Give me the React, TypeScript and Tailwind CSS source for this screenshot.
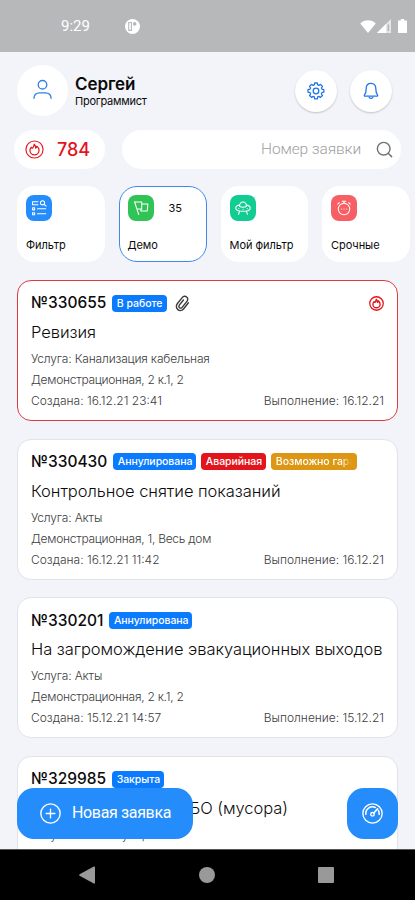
import React from 'react';
import { Search } from 'lucide-react';

type Badge = { text: string; className: string; faded?: boolean };

type Order = {
    id: string;
    badges: Badge[];
    title: string;
    service: string;
    address: string;
    created: string;
    due: string;
    urgent?: boolean;
    attachment?: boolean;
};

const BLUE = 'bg-[#0a7aff]';

const orders: Order[] = [
    {
        id: '330655',
        badges: [{ text: 'В работе', className: `${BLUE} w-[55px]` }],
        title: 'Ревизия',
        service: 'Канализация кабельная',
        address: 'Демонстрационная, 2 к.1, 2',
        created: '16.12.21 23:41',
        due: '16.12.21',
        urgent: true,
        attachment: true,
    },
    {
        id: '330430',
        badges: [
            { text: 'Аннулирована', className: `${BLUE} w-[83px]` },
            { text: 'Аварийная', className: 'bg-[#e3141b] w-[65px]' },
            { text: 'Возможно гарантия', className: 'bg-[#dd9712] w-[86px]', faded: true },
        ],
        title: 'Контрольное снятие показаний',
        service: 'Акты',
        address: 'Демонстрационная, 1, Весь дом',
        created: '16.12.21 11:42',
        due: '16.12.21',
    },
    {
        id: '330201',
        badges: [{ text: 'Аннулирована', className: `${BLUE} w-[83px]` }],
        title: 'На загромождение эвакуационных выходов',
        service: 'Акты',
        address: 'Демонстрационная, 2 к.1, 2',
        created: '15.12.21 14:57',
        due: '15.12.21',
    },
    {
        id: '329985',
        badges: [{ text: 'Закрыта', className: `${BLUE} w-[52px]` }],
        title: 'Прекращён вывоз ТБО (мусора)',
        service: 'Вывоз мусора',
        address: 'Демонстрационная, 1',
        created: '15.12.21 10:12',
        due: '15.12.21',
    },
];

function FireIcon({ className, bold }: { className?: string; bold?: boolean }) {
    return (
        <svg viewBox="0 0 20 20" className={className} fill="none" stroke="#e3141b" strokeLinecap="round" strokeLinejoin="round">
            <circle cx="10" cy="10" r="9" strokeWidth={bold ? 1.7 : 1.2} />
            <path
                d="M6.700 7.600C5.700 8.600 5.200 9.700 5.200 10.900a4.800 4.800 0 0 0 9.600 0c0-1.900-.9-3.400-2.300-4.400-.1 1-.5 1.600-1.200 2C11.200 6.800 10.700 5.400 9.700 4.500 9.600 6.200 8.900 7.200 8.100 8.500 7.500 8.600 7 8.200 6.700 7.600Z"
                strokeWidth={bold ? 1.8 : 1.3}
            />
        </svg>
    );
}

function ClipIcon() {
    return (
        <svg viewBox="0 0 16 18" className="ml-[8px] h-[17px] w-[15px]" fill="none" stroke="#3a3a3e" strokeWidth="1.500" strokeLinecap="round">
            <path d="M14.300 8.200 9.300 14.600C7.800 16.500 5 17 3.100 15.500S.9 11.200 2.400 9.300L7.900 2.500C9 1.100 11 .9 12.400 2s1.600 3 .5 4.400l-5.300 6.700c-.7.9-1.900 1-2.700.4s-1-1.800-.3-2.700L9 5.300" />
        </svg>
    );
}

function StatusBar() {
    return (
        <div className="flex h-[52px] shrink-0 items-center bg-[#b7b8ba] pl-[61px] pr-[8px] text-white">
            <span className="w-[64px] font-[Roboto,sans-serif] text-[15px]">9:29</span>
            <svg viewBox="0 0 14 14" className="h-[15px] w-[15px]">
                <circle cx="7" cy="7" r="7" fill="#fff" />
                <path d="M3.500 3.200H6v7.400H3.500Z" fill="none" stroke="#b7b8ba" strokeWidth="1" />
                <circle cx="9" cy="4.600" r="1.700" fill="#b7b8ba" />
            </svg>
            <div className="ml-auto flex items-center">
                <svg viewBox="0 0 16 13" className="h-[13px] w-[16px]" fill="#fff">
                    <path d="M8 13 .3 3.400C4.500-.9 11.500-.9 15.700 3.400Z" />
                </svg>
                <svg viewBox="0 0 14 14" className="ml-[1px] h-[14px] w-[14px]" fill="#fff">
                    <path d="M0 14 14 0v14Z" opacity=".65" />
                    <path d="M0 14 9 5v9Z" />
                    <path d="M10.500 5.500h1.700V12h-1.700Z" fill="#b7b8ba" />
                </svg>
                <svg viewBox="0 0 9 14" className="ml-[7px] h-[14px] w-[9px]" fill="#fff">
                    <path d="M2.800 0h3.400v1.400H9V14H0V1.400h2.800Z" />
                </svg>
            </div>
        </div>
    );
}

function Header() {
    return (
        <div className="flex items-center pl-[17px] pr-[23px] pt-[13px]">
            <div className="flex h-[51px] w-[51px] items-center justify-center rounded-full bg-white">
                <svg viewBox="0 0 20 22" className="mt-[-2px] h-[21px] w-[19px]" fill="none" stroke="#2f80e4" strokeWidth="1.400" strokeLinecap="round">
                    <circle cx="10" cy="6" r="4.500" />
                    <path d="M1 20.300c0-4 2.500-5.800 6-5.800h6c3.500 0 6 1.800 6 5.800" />
                </svg>
            </div>
            <div className="ml-[7px]">
                <div className="text-[17px] font-semibold leading-[20px] tracking-[-0.1px]">Сергей</div>
                <div className="text-[11px] leading-[14px] tracking-[-0.250px]">Программист</div>
            </div>
            <div className="ml-auto flex gap-[13px]">
                <div className="flex h-[42px] w-[42px] items-center justify-center rounded-full bg-white shadow-[0_1px_2px_rgba(0,0,0,0.2)]">
                    <svg viewBox="0 0 18 18" className="h-[18px] w-[18px]" fill="none" stroke="#2076e8" strokeWidth="1.300" strokeLinejoin="round">
                        <circle cx="9" cy="9" r="2.800" />
                        <path d="M7.700 1h2.600l.4 1.900 1.100.5 1.700-1 1.900 1.900-1 1.700.5 1.100 1.900.5v2.600l-1.900.5-.5 1.100 1 1.700-1.900 1.900-1.700-1-1.100.5-.4 1.900H7.700l-.4-1.900-1.100-.5-1.700 1-1.900-1.900 1-1.700-.5-1.100L1 10.200V7.600l2.100-.5.5-1.100-1-1.700 1.900-1.900 1.700 1 1.100-.5Z" />
                    </svg>
                </div>
                <div className="flex h-[42px] w-[42px] items-center justify-center rounded-full bg-white shadow-[0_1px_2px_rgba(0,0,0,0.2)]">
                    <svg viewBox="0 0 16 18" className="h-[18px] w-[16px]" fill="none" stroke="#2076e8" strokeWidth="1.300" strokeLinejoin="round">
                        <path d="M8 1.400c-3.400 0-4.800 2.300-4.800 5.200 0 3.200-.5 5-1.700 6.300-.4.500-.2 1.300.6 1.300h11.800c.8 0 1-.8.6-1.300C13.300 11.600 12.800 9.800 12.800 6.600c0-2.900-1.400-5.200-4.800-5.200Z" />
                        <path d="M6 14.800c.2 1 1 1.500 2 1.500s1.800-.5 2-1.500" />
                    </svg>
                </div>
            </div>
        </div>
    );
}

function SearchRow() {
    return (
        <div className="mt-[14px] flex px-[14px]">
            <div className="flex h-[39px] w-[91px] items-center rounded-full bg-white pl-[11px]">
                <FireIcon className="h-[19px] w-[19px]" />
                <span className="ml-[13px] text-[18px] font-medium text-[#e3141b]">784</span>
            </div>
            <div className="ml-[17px] flex h-[39px] flex-1 items-center justify-end rounded-full bg-white pr-[7px]">
                <span className="font-[Roboto,sans-serif] text-[15.500px] font-light tracking-[-0.120px] text-[#a0a0a0]">Номер заявки</span>
                <Search className="ml-[14px] h-[19px] w-[19px] text-[#717171]" strokeWidth={1.8} />
            </div>
        </div>
    );
}

const filters = [
    {
        label: 'Фильтр',
        color: 'bg-[#258cfb]',
        icon: (
            <>
                <path d="M11.500 6.500H6.300v2.800h5.200M6.300 12.300h2v2h-2zM6.300 17h2v2h-2zM11 13.300h8M11 18h8" />
                <circle cx="15.900" cy="7.500" r="2" />
                <path d="m17.500 9 1.800 1.800" />
            </>
        ),
    },
    {
        label: 'Демо',
        color: 'bg-[#30c457]',
        count: 35,
        active: true,
        icon: <path d="m6.300 6.500 4 12.300M6.300 6.700h6.900v6.800H8.900M13.200 8.600h5.900l-.6 6.800h-6.200l.4-1.900" />,
    },
    {
        label: 'Мой фильтр',
        color: 'bg-[#13cc91]',
        icon: (
            <>
                <path d="M9.200 9.700C6.900 10.200 5.500 11.200 5.500 12.500c0 1.900 3.100 3.200 7 3.200s7-1.300 7-3.200c0-1.300-1.400-2.300-3.700-2.800" />
                <path d="M9.200 11C9 8.500 10.500 6.800 12.500 6.800S16 8.500 15.800 11c-2 .9-4.600.9-6.600 0ZM9.200 15.700l-1 2.800M15.800 15.700l1 2.800M8.500 13h.1M12.500 13.700h.1M16.500 13h.1" />
            </>
        ),
    },
    {
        label: 'Срочные',
        color: 'bg-[#f85f64]',
        icon: (
            <>
                <circle cx="12.500" cy="13.500" r="5.500" />
                <path d="M12.500 8V6M10.800 6h3.400M6.500 8.800l1.500-1.500M18.500 8.800l-1.500-1.500M10 13.500h.1M12.500 13.500h.1M15 13.500h.1" />
            </>
        ),
    },
];

function Filters() {
    return (
        <div className="mt-[17px] flex shrink-0 gap-[14px] pl-[17px]">
            {filters.map((f) => (
                <div
                    key={f.label}
                    className={`h-[76px] shrink-0 rounded-[18px] border bg-white px-[8px] pt-[8px] ${f.active ? 'w-[88px] border-[#4189e8]' : 'w-[87.500px] border-transparent'}`}
                >
                    <div className="flex items-center">
                        <svg viewBox="0 0 25 25" className={`h-[26px] w-[26px] rounded-[8px] ${f.color}`} fill="none" stroke="#fff" strokeWidth="1" strokeLinecap="round" strokeLinejoin="round">
                            {f.icon}
                        </svg>
                        {f.count && <span className="ml-[15px] text-[11px]">{f.count}</span>}
                    </div>
                    <div className="mt-[16px] whitespace-nowrap text-[11px] leading-[16px] tracking-[-0.050px]">{f.label}</div>
                </div>
            ))}
        </div>
    );
}

function OrderCard({ order }: { order: Order }) {
    return (
        <div
            className={`h-[141px] shrink-0 rounded-[14px] border bg-white px-[13px] pt-[11px] ${order.urgent ? 'border-[#dc3b3b]' : 'border-[#e1e3e8]'}`}
        >
            <div className="flex h-[22px] items-center whitespace-nowrap">
                <span className="text-[15.500px] font-medium">№{order.id}</span>
                <div className="ml-[5.500px] flex gap-[5px]">
                    {order.badges.map((b) => (
                        <span key={b.text} className={`h-[17px] overflow-hidden rounded-[4px] px-[5px] text-[10.500px] font-medium leading-[17px] tracking-[-0.050px] text-white ${b.className}`}>
                            <span className={b.faded ? 'block overflow-hidden [mask-image:linear-gradient(to_right,black_85%,transparent)]' : 'block'}>{b.text}</span>
                        </span>
                    ))}
                </div>
                {order.attachment && <ClipIcon />}
                {order.urgent && <FireIcon bold className="ml-auto h-[15px] w-[15px]" />}
            </div>
            <div className="mt-[6px] whitespace-nowrap text-[16.500px] font-light leading-[24px] tracking-[-0.050px]">{order.title}</div>
            <div className="mt-[4px] text-[12px] font-light leading-[21px] text-[#3c3c3c]">
                <div className="tracking-[-0.160px]">Услуга: {order.service}</div>
                <div className="tracking-[-0.260px]">{order.address}</div>
                <div className="flex justify-between">
                    <span>Создана: {order.created}</span>
                    <span>Выполнение: {order.due}</span>
                </div>
            </div>
        </div>
    );
}

function NavBar() {
    return (
        <div className="flex h-[51px] shrink-0 items-center border-t border-[#555] bg-black pl-[79px]">
            <svg viewBox="0 0 16 18" className="h-[18px] w-[16px]" fill="#999">
                <path d="M14.800.5q1.200-.5 1.200 1v15q0 1.500-1.200 1L.6 9.800Q-.4 9 .6 8.200Z" />
            </svg>
            <div className="ml-[104px] h-[16px] w-[16px] rounded-full bg-[#999]" />
            <div className="ml-[103px] h-[16px] w-[16px] rounded-[1px] bg-[#999]" />
        </div>
    );
}

export default function App() {
    return (
        <div className="flex h-[900px] w-[415px] flex-col overflow-hidden bg-[#f2f4f9] font-[Inter,sans-serif] text-[#0b0b0b]">
            <StatusBar />
            <div className="relative flex min-h-0 flex-1 flex-col overflow-hidden">
                <Header />
                <SearchRow />
                <Filters />
                <div className="mt-[18px] flex flex-col gap-[17.700px] px-[17px]">
                    {orders.map((o) => (
                        <OrderCard key={o.id} order={o} />
                    ))}
                </div>

                {/* Floating actions over the list */}
                <div className="absolute bottom-[10.500px] left-[17px] right-[17px] flex justify-between">
                    <button className="flex h-[51px] w-[176px] items-center rounded-[17px] bg-[#258cfb] pl-[23px] text-white">
                        <svg viewBox="0 0 20 20" className="h-[21px] w-[21px]" fill="none" stroke="#fff" strokeWidth="1.300" strokeLinecap="round">
                            <circle cx="10" cy="10" r="9.200" />
                            <path d="M10 5.800v8.400M5.800 10h8.400" />
                        </svg>
                        <span className="ml-[11px] font-[Roboto,sans-serif] text-[16px] tracking-[-0.350px]">Новая заявка</span>
                    </button>
                    <button className="flex h-[51px] w-[51px] items-center justify-center rounded-[17px] bg-[#258cfb]">
                        <svg viewBox="0 0 20 20" className="h-[21px] w-[21px]" fill="none" stroke="#fff" strokeWidth="1.300" strokeLinecap="round">
                            <circle cx="10" cy="10" r="9.200" />
                            <path d="M3.700 10.800A6.300 6.300 0 0 1 12.700 4.300M15.700 7.200a6.300 6.300 0 0 1 .6 3.600" strokeWidth="1.500" />
                            <circle cx="10" cy="10.800" r="1.700" />
                            <path d="m11.300 9.500 3.500-3.900" strokeWidth="1.600" />
                        </svg>
                    </button>
                </div>
            </div>
            <NavBar />
        </div>
    );
}
